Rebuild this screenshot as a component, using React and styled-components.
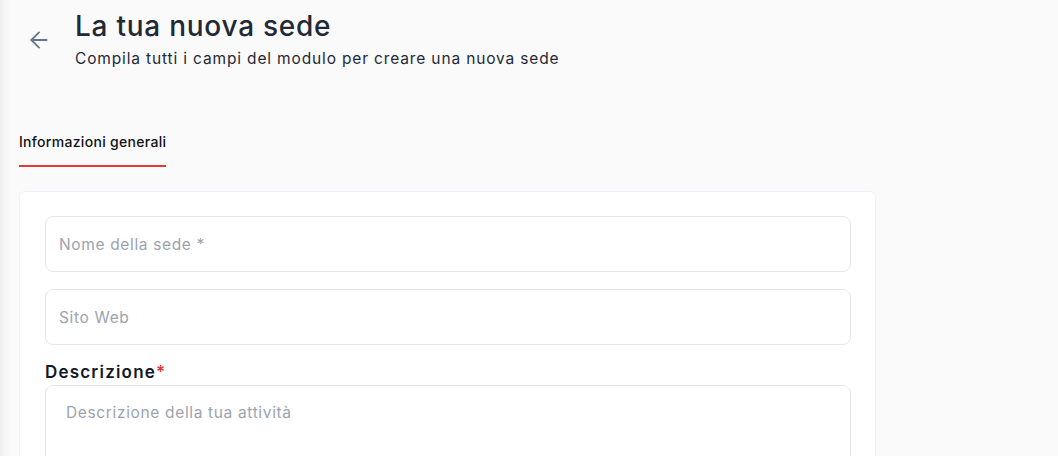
import styled, { createGlobalStyle } from "styled-components";

const GlobalStyle = createGlobalStyle`
  html, body {
    margin: 0;
    padding: 0;
    background: #fafafa;
  }
  body {
    font-family: "Inter", "Noto Sans", sans-serif;
    color: #1f2937;
  }
  * {
    box-sizing: border-box;
  }
`;

export default function App() {
  return (
    <>
      <GlobalStyle />
      <Page>
        <Header>
          <BackButton type="button" aria-label="Indietro">
            <svg width="26" height="26" viewBox="0 0 24 24" fill="none" stroke="currentColor" strokeWidth="1.7" strokeLinecap="round" strokeLinejoin="round">
              <path d="M19 12H5" />
              <path d="M12 19l-7-7 7-7" />
            </svg>
          </BackButton>
          <TitleBlock>
            <Title>La tua nuova sede</Title>
            <Subtitle>Compila tutti i campi del modulo per creare una nuova sede</Subtitle>
          </TitleBlock>
        </Header>

        <Tabs>
          <Tab active>Informazioni generali</Tab>
        </Tabs>

        <Card>
          <Input placeholder="Nome della sede *" />
          <Input placeholder="Sito Web" />
          <Field>
            <Label>
              Descrizione<Required>*</Required>
            </Label>
            <TextArea placeholder="Descrizione della tua attività" />
          </Field>
        </Card>
      </Page>
    </>
  );
}

const Page = styled.div`
  min-height: 100vh;
  padding: 0 0 0 19px;
  background: linear-gradient(to right, #efefef 0px, #f7f7f7 6px, #fafafa 11px);
`;

const Header = styled.div`
  display: flex;
  align-items: flex-start;
  gap: 23px;
  padding: 8px 0 0 7px;
`;

const BackButton = styled.button`
  display: flex;
  align-items: center;
  justify-content: center;
  width: 26px;
  height: 26px;
  margin-top: 19px;
  padding: 0;
  border: none;
  background: transparent;
  color: #64748b;
  cursor: pointer;
`;

const TitleBlock = styled.div`
  display: flex;
  flex-direction: column;
`;

const Title = styled.h1`
  margin: 0;
  font-size: 28px;
  line-height: 36px;
  font-weight: 500;
  letter-spacing: 0.75px;
  color: #1f2937;
`;

const Subtitle = styled.p`
  margin: 4px 0 0;
  font-size: 15.5px;
  line-height: 22px;
  letter-spacing: 0.85px;
  color: #1f2937;
`;

const Tabs = styled.div`
  display: flex;
  margin-top: 62px;
`;

const Tab = styled.div`
  padding: 0 0 13px;
  font-size: 14px;
  line-height: 20px;
  font-weight: 500;
  letter-spacing: 0.3px;
  color: #111;
  border-bottom: 2px solid ${(p) => (p.active ? "#e53935" : "transparent")};
`;

const Card = styled.div`
  width: 857px;
  margin-top: 24px;
  padding: 24px 24px 0 25px;
  display: flex;
  flex-direction: column;
  gap: 17px;
  background: #fff;
  border: 1px solid #eef2f7;
  border-bottom: none;
  border-radius: 6px 6px 0 0;
  min-height: 270px;
`;

const Input = styled.input`
  width: 100%;
  height: 56px;
  padding: 0 13px;
  border: 1px solid #e5e7eb;
  border-radius: 8px;
  font-family: inherit;
  font-size: 15.5px;
  letter-spacing: 0.65px;
  color: #1f2937;
  background: #fff;
  outline: none;

  &::placeholder {
    color: #9ca3af;
  }
`;

const Field = styled.div`
  display: flex;
  flex-direction: column;
  gap: 2px;
  margin-top: -1px;
`;

const Label = styled.label`
  font-size: 17px;
  line-height: 22px;
  font-weight: 600;
  letter-spacing: 1.2px;
  color: #111827;
`;

const Required = styled.span`
  color: #e53935;
`;

const TextArea = styled.textarea`
  width: 100%;
  height: 120px;
  padding: 16px 20px;
  border: 1px solid #e5e7eb;
  border-radius: 8px;
  font-family: inherit;
  font-size: 15.5px;
  line-height: 22px;
  letter-spacing: 0.65px;
  resize: none;
  outline: none;
  color: #1f2937;

  &::placeholder {
    color: #9ca3af;
  }
`;
